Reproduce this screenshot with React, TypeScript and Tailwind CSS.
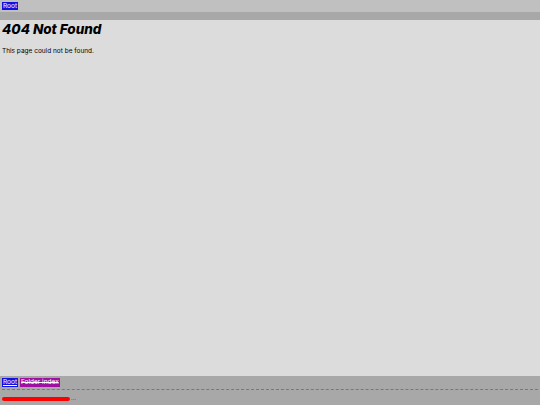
export default function App() {
  return (
    <div
      className="flex h-[405px] w-[540px] flex-col bg-[#dcdcdc] text-black"
      style={{ fontFamily: "Inter, 'Liberation Sans', sans-serif" }}
    >
      {/* top bar */}
      <div className="flex h-[12px] items-center bg-[#c0c0c0] px-[2px]">
        <span className="bg-[#1010e0] px-[1px] text-[6.5px] leading-[8px] text-white">Root</span>
      </div>
      <div className="h-[8px] bg-[#a8a8a8]" />

      {/* main */}
      <div className="flex-1 px-[2px]">
        <h1 className="mt-[1px] text-[13.5px] font-extrabold italic leading-[16px]">404 Not Found</h1>
        <p className="mt-[10px] text-[6.5px] leading-[8px]">This page could not be found.</p>
      </div>

      {/* footer */}
      <div className="h-[29px] bg-[#a8a8a8] px-[2px] pt-[2px]">
        <div className="flex gap-[2px]">
          <span className="bg-[#1010e0] px-[1px] text-[6.5px] leading-[9px] text-white underline">Root</span>
          <span className="bg-[#a010a0] px-[1px] text-[6.5px] leading-[9px] text-white line-through">Folder index</span>
        </div>
        <div className="mt-[2px] border-t border-dashed border-[#787878]" />
        <div className="mt-[5px] flex items-end gap-[1px]">
          <div className="h-[4px] w-[68px] rounded-full bg-[#ff0000]" />
          <span className="text-[6px] leading-[6px] text-[#333]">...</span>
        </div>
      </div>
    </div>
  )
}
